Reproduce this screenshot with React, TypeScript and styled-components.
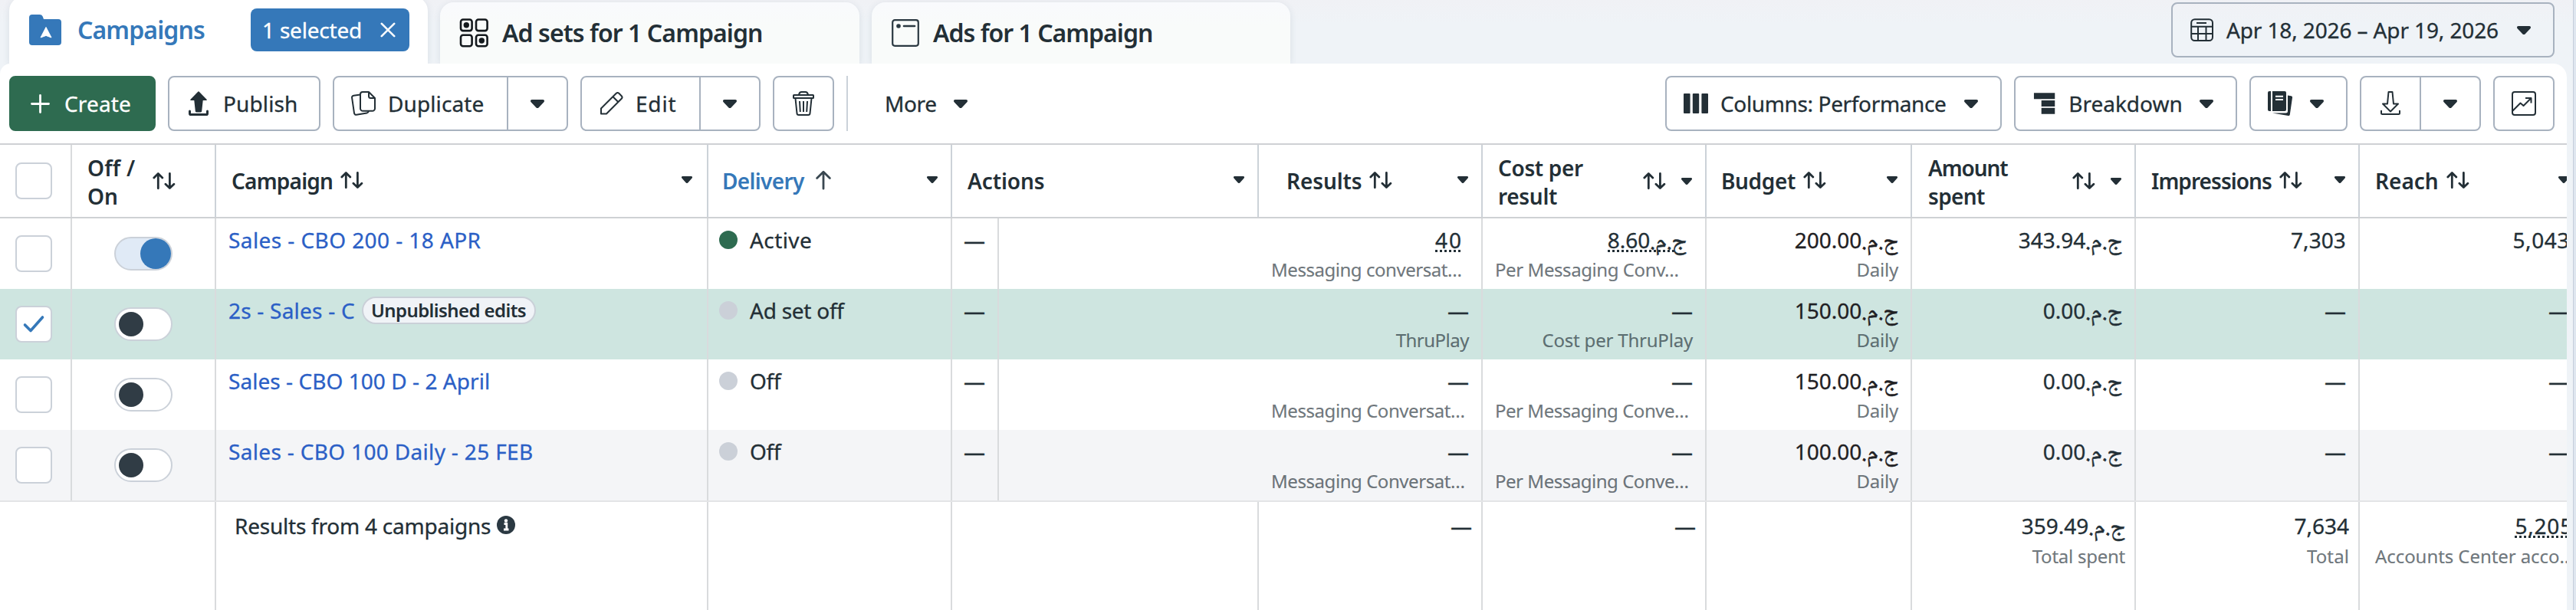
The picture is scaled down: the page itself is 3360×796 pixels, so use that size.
import React from 'react';
import styled, { createGlobalStyle, css } from 'styled-components';

const ink = '#232f36';
const blue = '#3578b9';
const link = '#2b5fc6';
const line = '#d9dbdd';
const headLine = '#cfd1d4';
const buttonLine = '#a8b2bf';

const GlobalStyle = createGlobalStyle`
  * { box-sizing: border-box; }
  body { margin: 0; background: #eff2f6; }
`;

const Page = styled.div`
  width: 3360px;
  height: 796px;
  display: flex;
  overflow: hidden;
  background: linear-gradient(#f0f1f5, #eff3f7 30px, #eff3f7);
  color: ${ink};
  font: 400 28px/36px 'Noto Sans', sans-serif;
  white-space: nowrap;
`;

const Main = styled.div`
  width: 3348px;
  flex: none;
  display: flex;
  flex-direction: column;
`;

const Gutter = styled.div`
  flex: 1;
  margin-left: 8px;
  border-left: 1px solid #c6cedb;
  background: #dfe6ef;
`;

/* ---------- text ---------- */

const Label = styled.span<{ $track?: number; $bold?: boolean }>`
  letter-spacing: ${(p) => p.$track ?? 0}px;
  font-weight: ${(p) => (p.$bold ? 600 : 400)};
  -webkit-text-stroke: ${(p) => (p.$bold ? 0 : 0.3)}px currentColor;
`;

const NameLink = styled(Label)`
  color: ${link};
`;

const SortedLabel = styled(Label)`
  color: ${blue};
`;

/* ---------- tabs ---------- */

const TabBar = styled.div`
  height: 83px;
  padding: 0 16px 0 12px;
  display: flex;
  align-items: flex-end;
`;

const Tab = styled.div<{ $width: number; $active?: boolean }>`
  width: ${(p) => p.$width}px;
  height: 80px;
  margin-right: 16px;
  padding: 0 24px;
  display: flex;
  align-items: center;
  font-size: 32px;
  line-height: 40px;
  border-radius: 18px 18px 0 0;
  background: linear-gradient(#f9fafd, #f9fbfa 30px);
  box-shadow: 0 2px 10px rgba(60, 80, 110, 0.12);
  ${(p) =>
    p.$active &&
    css`
      height: 87px;
      padding-bottom: 1px;
      background: #fff;
      color: ${blue};
    `}
`;

const TabIcon = styled.svg<{ $gap?: number }>`
  flex: none;
  margin-right: ${(p) => p.$gap ?? 18}px;
`;

const SelectedPill = styled.div`
  width: 207px;
  height: 56px;
  margin-left: auto;
  padding: 0 18px 0 15px;
  display: flex;
  align-items: center;
  justify-content: space-between;
  border-radius: 8px;
  background: ${blue};
  color: #fff;
  font-size: 28px;
`;

/* ---------- buttons ---------- */

const Button = styled.div<{ $width: number; $primary?: boolean }>`
  width: ${(p) => p.$width}px;
  height: 72px;
  flex: none;
  padding: 0 22px;
  display: flex;
  align-items: center;
  gap: 16px;
  border: 2px solid ${buttonLine};
  border-radius: 8px;
  ${(p) =>
    p.$primary &&
    css`
      border-color: #2e6b50;
      background: #2e6b50;
      color: #fff;
    `}
`;

const SplitButton = styled.div`
  display: flex;

  & > :first-child {
    border-radius: 8px 0 0 8px;
  }
  & > :last-child {
    border-left: 0;
    border-radius: 0 8px 8px 0;
  }
`;

const CaretSlot = styled.span`
  width: 32px;
  margin-left: auto;
  display: flex;
  justify-content: center;
`;

const DateButton = styled(Button)`
  margin: 0 0 8px auto;
`;

const Toolbar = styled.div`
  height: 104px;
  padding: 0 16px 0 12px;
  display: flex;
  align-items: center;
  gap: 16px;
`;

const Divider = styled.div`
  width: 2px;
  height: 72px;
  background: #cbd2d9;
`;

const MoreMenu = styled.div`
  width: 165px;
  margin-left: 32px;
  margin-right: auto;
  padding-right: 50px;
  display: flex;
  align-items: center;
`;

/* ---------- table ---------- */

const Panel = styled.div`
  flex: 1;
  overflow: hidden;
  border-radius: 14px 18px 0 0;
  background: #fff;
  position: relative;
`;

const HeadRow = styled.div`
  height: 98px;
  width: 3370px;
  display: flex;
  border-top: 2px solid ${headLine};
  border-bottom: 2px solid ${headLine};
`;

const Row = styled.div<{ $tone?: string }>`
  height: 92px;
  width: 3370px;
  display: flex;
  background: ${(p) => p.$tone ?? '#fff'};
`;

const FootRow = styled.div`
  height: 143px;
  width: 3370px;
  display: flex;
  border-top: 2px solid #e3e4e6;
`;

const HeadCell = styled.div<{ $width: number; $left?: number; $right?: number }>`
  width: ${(p) => p.$width}px;
  flex: none;
  padding: 0 ${(p) => p.$right ?? 17}px 0 ${(p) => p.$left ?? 20}px;
  display: flex;
  align-items: center;
  border-right: 2px solid #ccd2d8;
  line-height: 37px;
`;

const HeadText = styled.div<{ $lines?: boolean }>`
  display: flex;
  flex-direction: column;
  padding-top: ${(p) => (p.$lines ? 3 : 0)}px;
`;

const HeadIcons = styled.div<{ $lines?: boolean }>`
  flex: 1;
  margin-left: 10px;
  padding-bottom: ${(p) => (p.$lines ? 0 : 3)}px;
  display: flex;
  align-items: center;
  justify-content: ${(p) => (p.$lines ? 'flex-end' : 'space-between')};
  gap: 20px;
`;

const DeliveryIcons = styled(HeadIcons)`
  margin-left: 14px;
`;

const Cell = styled.div<{ $width: number; $left?: number }>`
  width: ${(p) => p.$width}px;
  flex: none;
  padding: 10px 16px 0 ${(p) => p.$left ?? 16}px;
  border-right: 2px solid ${line};
`;

const FootName = styled(Cell)`
  padding-top: 13px;
`;

const NumberCell = styled(Cell)<{ $foot?: boolean; $subLeft?: number }>`
  padding: ${(p) => (p.$foot ? '13px 12px 0 20px' : '10px 16px 0')};
  padding-left: ${(p) => p.$subLeft ?? 16}px;
  display: flex;
  flex-direction: column;
  align-items: flex-end;
  gap: ${(p) => (p.$foot ? 6 : 5)}px;
`;

const ControlCell = styled.div<{ $width: number; $left?: number }>`
  width: ${(p) => p.$width}px;
  flex: none;
  display: flex;
  align-items: center;
  ${(p) => (p.$left ? `padding-left: ${p.$left}px;` : 'justify-content: center;')}
  border-right: 2px solid ${line};
`;

const Inline = styled.div`
  height: 36px;
  display: flex;
  align-items: center;
`;

const Badge = styled.span`
  width: 227px;
  height: 36px;
  margin-left: 9px;
  padding-left: 10px;
  display: flex;
  align-items: center;
  border: 2px solid #cad0d8;
  border-radius: 18px;
  background: #f0f3f7;
  font-size: 24px;
`;

const StatusDot = styled.span<{ $on?: boolean }>`
  width: 24px;
  height: 24px;
  margin-right: 16px;
  border-radius: 50%;
  background: ${(p) => (p.$on ? '#2e6b50' : '#cbd0d8')};
`;

const Value = styled.span<{ $dotted?: boolean; $dark?: boolean; $inset?: boolean; $currency?: boolean }>`
  height: 36px;
  margin-right: ${(p) => (p.$inset ? 8 : 0)}px;
  color: ${(p) => (p.$dark ? '#1f2023' : ink)};
  ${(p) =>
    p.$dotted &&
    css`
      background: repeating-linear-gradient(90deg, ${ink} 0 3px, transparent 3px 6px) 0 31px /
        ${p.$currency ? 'calc(100% - 16px)' : '100%'} 3px no-repeat;
    `}
`;

const Pounds = styled.span`
  font-family: 'Noto Naskh Arabic', 'DejaVu Sans', sans-serif;
  font-size: 31px;
  line-height: 0;
  letter-spacing: 0;
  -webkit-text-stroke: 0.5px currentColor;
`;

const Sub = styled.span<{ $clipped?: boolean; $track?: number }>`
  height: 32px;
  font-size: 24px;
  line-height: 32px;
  color: rgba(28, 43, 51, 0.65);
  letter-spacing: ${(p) => p.$track ?? -0.2}px;
  -webkit-text-stroke: 0.2px currentColor;
  ${(p) => p.$clipped && 'align-self: flex-start;'}
`;

const Checkbox = styled.div`
  width: 48px;
  height: 48px;
  display: grid;
  place-items: center;
  border: 2px solid #cbd1d9;
  border-radius: 8px;
  background: #fff;
`;

const Toggle = styled.div<{ $on?: boolean }>`
  width: 76px;
  height: 44px;
  display: flex;
  align-items: center;
  justify-content: ${(p) => (p.$on ? 'flex-end' : 'flex-start')};
  padding: 0 ${(p) => (p.$on ? 0 : 4)}px;
  border: 2px solid #cbd1d9;
  border-radius: 22px;
  background: ${(p) => (p.$on ? '#e0eaf6' : '#fff')};

  &::after {
    content: '';
    width: ${(p) => (p.$on ? 40 : 32)}px;
    height: ${(p) => (p.$on ? 40 : 32)}px;
    border-radius: 50%;
    background: ${(p) => (p.$on ? blue : '#303c45')};
  }
`;

/* ---------- icons ---------- */

const Icon = ({ children }: { children: React.ReactNode }) => (
  <svg width="32" height="32" viewBox="0 0 32 32" fill="none" stroke="currentColor" strokeWidth="2" strokeLinejoin="round">
    {children}
  </svg>
);

const Caret = () => (
  <svg width="18" height="11" viewBox="0 0 18 11">
    <path d="M1.8 0h14.4c1.7 0 2.4 2 1.2 3.2l-6.6 7a2.5 2.5 0 0 1-3.6 0l-6.6-7C-.6 2 .1 0 1.8 0z" fill={ink} />
  </svg>
);

const SmallCaret = () => (
  <svg width="14" height="9" viewBox="0 0 14 9">
    <path d="M1.3 0h11.4c1.3 0 1.8 1.5.9 2.5L8.5 8.2a2 2 0 0 1-3 0L.4 2.5C-.5 1.5 0 0 1.3 0z" fill={ink} />
  </svg>
);

const SortIcon = () => (
  <svg width="30" height="24" viewBox="0 0 30 24" fill="none" stroke={ink} strokeWidth="2.8" strokeLinecap="round" strokeLinejoin="round">
    <path d="M7.3 21.8V2.6M1.8 8l5.5-5.6L12.8 8M22.4 2.4v19.2M16.9 16.2l5.5 5.4 5.5-5.4" />
  </svg>
);

const UpIcon = () => (
  <svg width="22" height="26" viewBox="0 0 22 26" fill="none" stroke="#3a4851" strokeWidth="2.8" strokeLinecap="round" strokeLinejoin="round">
    <path d="M11 24.2V2.4M2.6 10.6 11 2.2l8.4 8.4" />
  </svg>
);

const FolderIcon = () => (
  <TabIcon $gap={19} width="46" height="40" viewBox="0 0 46 40">
    <path d="M6 0h9.5c2 0 3.400.8 4.200 2.600L21 6h19a4 4 0 0 1 4 4v26a4 4 0 0 1-4 4H6a4 4 0 0 1-4-4V4a4 4 0 0 1 4-4z" fill={blue} />
    <path d="M24 16.5 31 30l-7-2.6L17 30z" fill="#fff" stroke="#fff" strokeWidth="1" strokeLinejoin="round" />
  </TabIcon>
);

const GridIcon = () => (
  <TabIcon $gap={17} width="40" height="40" viewBox="0 0 40 40" fill="none" stroke="#14191d" strokeWidth="2.6">
    <rect x="3" y="2.5" width="14.6" height="14.6" rx="3" />
    <rect x="23" y="2.5" width="14.6" height="14.6" rx="3" />
    <rect x="3" y="22.7" width="14.6" height="14.6" rx="3" />
    <rect x="23" y="22.7" width="14.6" height="14.6" rx="3" />
    <circle cx="10.3" cy="9.8" r="3.7" fill="#14191d" stroke="none" />
    <circle cx="30.3" cy="30" r="3.7" fill="#14191d" stroke="none" />
  </TabIcon>
);

const AdIcon = () => (
  <TabIcon width="38" height="36" viewBox="0 0 38 36" fill="none" stroke="#2b3942" strokeWidth="2.2">
    <rect x="3.2" y="1.2" width="33.6" height="33.6" rx="3" />
    <circle cx="11" cy="9" r="2.8" fill="#2b3942" stroke="none" />
    <path d="M18 9h14" strokeLinecap="round" strokeWidth="2.6" />
  </TabIcon>
);

const CloseIcon = () => (
  <svg width="20" height="20" viewBox="0 0 20 20" stroke="#fff" strokeWidth="2.6" strokeLinecap="round">
    <path d="m1.8 1.8 16.4 16.4M18.2 1.8 1.8 18.2" />
  </svg>
);

const CalendarIcon = () => (
  <Icon>
    <rect x="2.2" y="2.2" width="27.8" height="27.8" rx="4.5" />
    <path d="M9 7h13M2.2 11.700h27.800M2.200 21h27.800M11 11.700V30M21.500 11.700V30" />
  </Icon>
);

const PlusIcon = () => (
  <Icon>
    <path d="M16.5 5.5v22M5.5 16.5h22" strokeWidth="2.8" strokeLinecap="round" />
  </Icon>
);

const PublishIcon = () => (
  <Icon>
    <path d="M16 1 26 11.2h-5L19.4 26a1 1 0 0 1-1 .8h-4.8a1 1 0 0 1-1-.8L11 11.2H6z" fill="currentColor" strokeWidth="1.6" />
    <path d="M4.5 26v3.2c0 .8.5 1.3 1.3 1.3h20.4c.8 0 1.3-.5 1.3-1.3V26" strokeWidth="3" strokeLinecap="round" />
  </Icon>
);

const DuplicateIcon = () => (
  <Icon>
    <path d="M15 1h8l8 8v13.5a3.3 3.3 0 0 1-3.3 3.3H15.3a3.3 3.3 0 0 1-3.3-3.3V4a3 3 0 0 1 3-3z" />
    <path d="M23 1v5.5A2.5 2.5 0 0 0 25.5 9H31" />
    <path d="M12 4.5 3.2 5.7A2.5 2.5 0 0 0 1.1 8.6L4 28.7a2.5 2.5 0 0 0 2.900 2.100L20.500 28.500c1.300-.2 2.100-1 2.300-2.400" />
  </Icon>
);

const PencilIcon = () => (
  <Icon>
    <path d="M3 29.500v-7L22.800 2.800a2.500 2.500 0 0 1 3.500 0l3.400 3.400a2.500 2.500 0 0 1 0 3.500L10 29.500H3zM18.500 7.200l6.800 6.800" />
  </Icon>
);

const TrashIcon = () => (
  <Icon>
    <rect x="3" y="5" width="26" height="4" rx=".6" />
    <path d="M10 4.6C10.5 2 12 1 13.5 1h5c1.5 0 3 1 3.5 3.600M5.500 9.500l2 19.300c.1 1.300.9 2.100 2.200 2.100h12.600c1.300 0 2.100-.8 2.200-2.100l2-19.300M11 13l.8 14M16 13v14M21 13l-.8 14" />
  </Icon>
);

const ColumnsIcon = () => (
  <Icon>
    <g fill="currentColor" stroke="none">
      <rect y="3" width="8.6" height="26" rx="1" />
      <rect x="11.8" y="3" width="8.4" height="26" rx="1" />
      <rect x="23.4" y="3" width="8.6" height="26" rx="1" />
    </g>
  </Icon>
);

const BreakdownIcon = () => (
  <Icon>
    <path d="M2 2h28v8H2zM12 12h18v8H12zM12 22h18v8H12z" fill="currentColor" stroke="none" />
  </Icon>
);

const ReportsIcon = () => (
  <Icon>
    <g fill="currentColor" stroke="none">
      <path d="M2 0h2v26H2a2 2 0 0 1-2-2V2a2 2 0 0 1 2-2z" />
      <path d="M6 0h16a2 2 0 0 1 2 2v22a2 2 0 0 1-2 2H6z" />
      <path d="M26 5.5 30.500 6.300a1.800 1.800 0 0 1 1.500 2.100L28.800 30.500a1.800 1.800 0 0 1-2.100 1.500L6 28.400h17.500a2.500 2.500 0 0 0 2.500-2.500z" />
    </g>
    <path d="M10 6.8h10M10 11h10" stroke="#fff" />
  </Icon>
);

const DownloadIcon = () => (
  <Icon>
    <path d="M13.5 1h5l1.5 15.500h6L16 26.500 6 16.500h6z" />
    <path d="M4 25v3.5c0 1 .6 1.500 1.500 1.500h21c.9 0 1.500-.5 1.500-1.500V25" />
  </Icon>
);

const ChartIcon = () => (
  <Icon>
    <rect x="1" y="1" width="30" height="30" rx="3" />
    <path d="M1.5 25.5 11.5 15.5l4 3.5L25 9.5M18 9h7.5v6.5" />
  </Icon>
);

const InfoSvg = styled.svg`
  margin: -2px 0 0 8px;
`;

const InfoIcon = () => (
  <InfoSvg width="24" height="24" viewBox="0 0 24 24">
    <circle cx="12" cy="12" r="12" fill="#2b3942" />
    <circle cx="12" cy="6.5" r="2.2" fill="#fff" />
    <path d="M9.5 10.5h3.3V18M9 18h6.5" stroke="#fff" strokeWidth="2.8" fill="none" />
  </InfoSvg>
);

const CheckIcon = () => (
  <svg width="30" height="24" viewBox="0 0 30 24" fill="none" stroke={blue} strokeWidth="3.6" strokeLinecap="round" strokeLinejoin="round">
    <path d="m3.5 13 7.5 7.5L26.5 3" />
  </svg>
);

/* ---------- data ---------- */

interface HeadDef {
  lines: [string, number][];
  width: number;
  left?: number;
  sort?: boolean;
}

const heads: HeadDef[] = [
  { lines: [['Actions', -0.1]], width: 400 },
  { lines: [['Results', -0.1]], width: 292, left: 36, sort: true },
  { lines: [['Cost per', -0.36], ['result', -0.31]], width: 292, sort: true },
  { lines: [['Budget', -0.35]], width: 268, left: 19, sort: true },
  { lines: [['Amount', -1.1], ['spent', -0.64]], width: 292, left: 21, sort: true },
  { lines: [['Impressions', -0.94]], width: 292, sort: true },
  { lines: [['Reach', 0]], width: 292, sort: true },
];

interface Figure {
  value?: string;
  track?: number;
  currency?: boolean;
  dotted?: boolean;
  dark?: boolean;
  sub?: string;
  subTrack?: number;
}

interface Campaign {
  name: string;
  track: number;
  edits?: boolean;
  selected?: boolean;
  on?: boolean;
  status: string;
  statusTrack: number;
  tone?: string;
  figures: Figure[];
}

const none: Figure = { value: '—' };
const conversations: Figure = { value: '—', sub: 'Messaging Conversat…', subTrack: -0.44 };
const perConversation: Figure = { value: '—', sub: 'Per Messaging Conve…', subTrack: -0.47 };
const zero: Figure = { value: '0.00', track: 1.8, currency: true };
const budget = (value: string, track: number): Figure => ({ value, track, currency: true, dark: true, sub: 'Daily' });

const campaigns: Campaign[] = [
  {
    name: 'Sales - CBO 200 - 18 APR', track: 0.42, on: true, status: 'Active', statusTrack: 0.4,
    figures: [
      { value: '40', track: 2, dotted: true, sub: 'Messaging conversat…', subTrack: -0.46 },
      { value: '8.60', track: 1.4, currency: true, dotted: true, sub: 'Per Messaging Conv…', subTrack: -0.42 },
      budget('200.00', 1.8),
      { value: '343.94', track: 1.2, currency: true },
      { value: '7,303', track: 0.1 },
      { value: '5,043', track: 0.6 },
    ],
  },
  {
    name: '2s - Sales - C', track: 0.22, edits: true, selected: true, status: 'Ad set off', statusTrack: -0.25, tone: '#cee5e0',
    figures: [{ value: '—', sub: 'ThruPlay', subTrack: -0.5 }, { value: '—', sub: 'Cost per ThruPlay' }, budget('150.00', 1.3), zero, none, none],
  },
  {
    name: 'Sales - CBO 100 D - 2 April', track: 0.05, status: 'Off', statusTrack: -0.3,
    figures: [conversations, perConversation, budget('150.00', 1.3), zero, none, none],
  },
  {
    name: 'Sales - CBO 100 Daily - 25 FEB', track: 0.33, status: 'Off', statusTrack: -0.3, tone: '#f4f5f7',
    figures: [conversations, perConversation, budget('100.00', 1.5), zero, none, none],
  },
];

const totals: Figure[] = [
  none,
  none,
  {},
  { value: '359.49', track: 1.5, currency: true, sub: 'Total spent', subTrack: -0.25 },
  { value: '7,634', track: 0, sub: 'Total', subTrack: 0.1 },
  { value: '5,205', track: 0.8, dotted: true, sub: 'Accounts Center acco…', subTrack: -0.07 },
];

const bodyWidths = [631, 292, 268, 292, 292, 292];
const footWidths = [292, 292, 268, 292, 292, 292];

/* ---------- composed parts ---------- */

const FigureCell = ({ figure, width, foot, subLeft }: { figure: Figure; width: number; foot?: boolean; subLeft?: number }) => (
  <NumberCell $width={width} $foot={foot} $subLeft={subLeft}>
    {figure.value && (
      <Value
        $dotted={figure.dotted}
        $dark={figure.dark}
        $inset={figure.dotted && !foot}
        $currency={figure.currency}
        dir={figure.currency ? 'rtl' : undefined}
      >
        {figure.currency && <Pounds>ج.م.</Pounds>}
        <Label $track={figure.track}>{figure.value}</Label>
      </Value>
    )}
    {figure.sub && (
      <Sub $clipped={figure.sub.endsWith('…')} $track={figure.subTrack}>
        {figure.sub}
      </Sub>
    )}
  </NumberCell>
);

const MenuCaret = () => (
  <CaretSlot>
    <Caret />
  </CaretSlot>
);

export default function App() {
  return (
    <Page>
      <GlobalStyle />
      <Main>
        <TabBar>
          <Tab $width={546} $active>
            <FolderIcon />
            <Label $bold $track={-0.89}>Campaigns</Label>
            <SelectedPill>
              <Label $track={-0.21}>1 selected</Label>
              <CloseIcon />
            </SelectedPill>
          </Tab>
          <Tab $width={547}>
            <GridIcon />
            <Label $bold $track={-0.93}>Ad sets for 1 Campaign</Label>
          </Tab>
          <Tab $width={546}>
            <AdIcon />
            <Label $bold $track={-0.99}>Ads for 1 Campaign</Label>
          </Tab>
          <DateButton $width={500}>
            <CalendarIcon />
            <Label $track={-0.12}>Apr 18, 2026 – Apr 19, 2026</Label>
            <MenuCaret />
          </DateButton>
        </TabBar>

        <Panel>
          <Toolbar>
            <Button $width={191} $primary>
              <PlusIcon />
              <Label $track={0.14}>Create</Label>
            </Button>
            <Button $width={199}>
              <PublishIcon />
              <Label $track={0.11}>Publish</Label>
            </Button>
            <SplitButton>
              <Button $width={229}>
                <DuplicateIcon />
                <Label $track={0.1}>Duplicate</Label>
              </Button>
              <Button $width={78}>
                <MenuCaret />
              </Button>
            </SplitButton>
            <SplitButton>
              <Button $width={157}>
                <PencilIcon />
                <Label $track={0.8}>Edit</Label>
              </Button>
              <Button $width={78}>
                <MenuCaret />
              </Button>
            </SplitButton>
            <Button $width={80}>
              <TrashIcon />
            </Button>
            <Divider />
            <MoreMenu>
              <Label $track={-0.4}>More</Label>
              <MenuCaret />
            </MoreMenu>
            <Button $width={439}>
              <ColumnsIcon />
              <Label $track={-0.36}>Columns: Performance</Label>
              <MenuCaret />
            </Button>
            <Button $width={291}>
              <BreakdownIcon />
              <Label>Breakdown</Label>
              <MenuCaret />
            </Button>
            <Button $width={128}>
              <ReportsIcon />
              <MenuCaret />
            </Button>
            <SplitButton>
              <Button $width={80}>
                <DownloadIcon />
              </Button>
              <Button $width={78}>
                <MenuCaret />
              </Button>
            </SplitButton>
            <Button $width={80}>
              <ChartIcon />
            </Button>
          </Toolbar>

          <HeadRow>
            <ControlCell $width={94} $left={20}>
              <Checkbox />
            </ControlCell>
            <HeadCell $width={188} $right={51}>
              <HeadText $lines>
                <Label $bold $track={0.2}>Off /</Label>
                <Label $bold>On</Label>
              </HeadText>
              <HeadIcons $lines>
                <SortIcon />
              </HeadIcons>
            </HeadCell>
            <HeadCell $width={642} $right={19}>
              <Label $bold $track={-0.78}>Campaign</Label>
              <HeadIcons>
                <SortIcon />
                <SmallCaret />
              </HeadIcons>
            </HeadCell>
            <HeadCell $width={318} $left={18}>
              <SortedLabel $bold $track={-0.65}>Delivery</SortedLabel>
              <DeliveryIcons>
                <UpIcon />
                <SmallCaret />
              </DeliveryIcons>
            </HeadCell>
            {heads.map((head) => {
              const stacked = head.lines.length > 1;
              return (
                <HeadCell key={head.lines[0][0]} $width={head.width} $left={head.left}>
                  <HeadText $lines={stacked}>
                    {head.lines.map(([text, track]) => (
                      <Label key={text} $bold $track={track}>
                        {text}
                      </Label>
                    ))}
                  </HeadText>
                  <HeadIcons $lines={stacked}>
                    {head.sort ? <SortIcon /> : <span />}
                    <SmallCaret />
                  </HeadIcons>
                </HeadCell>
              );
            })}
          </HeadRow>

          {campaigns.map((c) => (
            <Row key={c.name} $tone={c.tone}>
              <ControlCell $width={94} $left={20}>
                <Checkbox>{c.selected && <CheckIcon />}</Checkbox>
              </ControlCell>
              <ControlCell $width={188}>
                <Toggle $on={c.on} />
              </ControlCell>
              <Cell $width={642}>
                <Inline>
                  <NameLink $track={c.track}>{c.name}</NameLink>
                  {c.edits && (
                    <Badge>
                      <Label $bold $track={-0.58}>Unpublished edits</Label>
                    </Badge>
                  )}
                </Inline>
              </Cell>
              <Cell $width={318} $left={14}>
                <Inline>
                  <StatusDot $on={c.on} />
                  <Label $track={c.statusTrack}>{c.status}</Label>
                </Inline>
              </Cell>
              <Cell $width={61} $left={15}>
                <Label>—</Label>
              </Cell>
              {c.figures.map((figure, i) => (
                <FigureCell key={i} figure={figure} width={bodyWidths[i]} subLeft={i === 0 ? 355 : 16} />
              ))}
            </Row>
          ))}

          <FootRow>
            <Cell $width={282} />
            <FootName $width={642} $left={24}>
              <Inline>
                <Label $track={-0.23}>Results from 4 campaigns</Label>
                <InfoIcon />
              </Inline>
            </FootName>
            <Cell $width={318} />
            <Cell $width={400} />
            {totals.map((figure, i) => (
              <FigureCell key={i} figure={figure} width={footWidths[i]} foot subLeft={20} />
            ))}
          </FootRow>
        </Panel>
      </Main>
      <Gutter />
    </Page>
  );
}
